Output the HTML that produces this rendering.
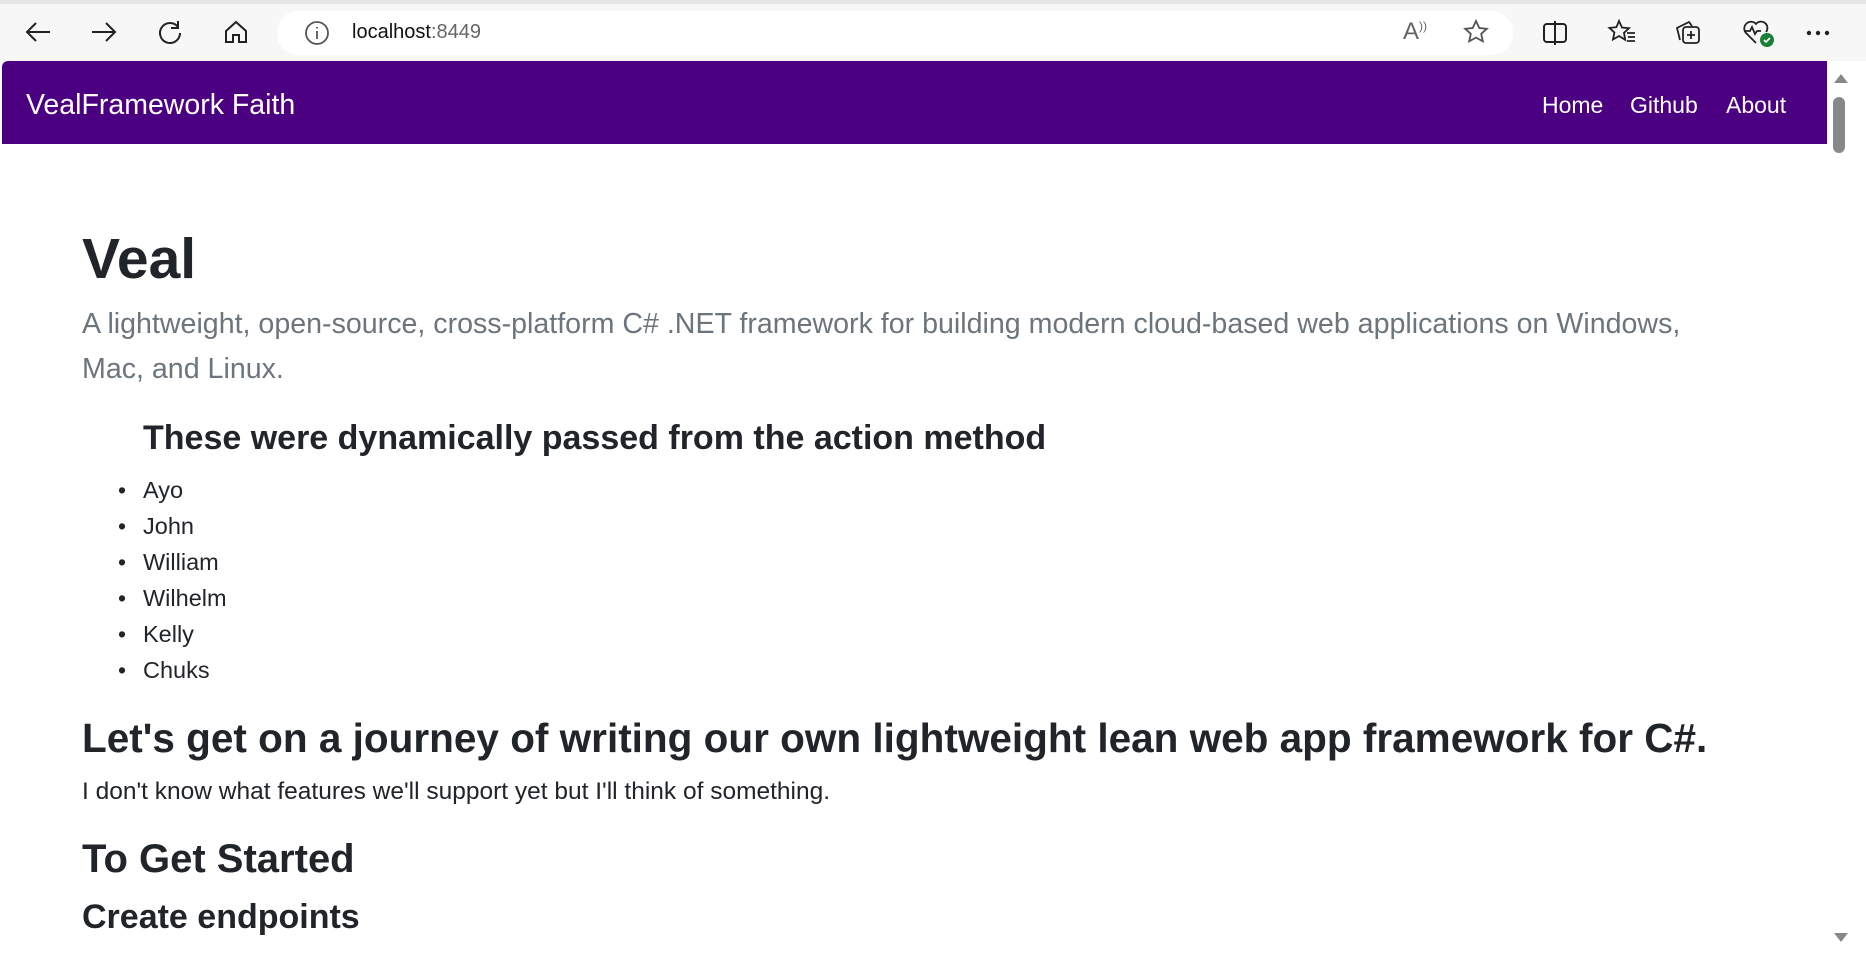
<!DOCTYPE html>
<html><head><meta charset="utf-8"><style>
*{margin:0;padding:0;box-sizing:border-box}
body{width:1866px;height:955px;overflow:hidden;background:#fff;font-family:"Liberation Sans",sans-serif;color:#212529;position:relative}
.a{position:absolute;white-space:nowrap}
.ico{position:absolute}
</style></head><body>
<div class="a" style="left:0;top:0;width:1866px;height:61px;background:#f7f7f7"></div>
<div class="a" style="left:0;top:0;width:1866px;height:4px;background:#e6e6e6"></div>
<svg class="ico" style="left:24px;top:20px" width="28" height="24" viewBox="0 0 28 24" fill="none" stroke="#222" stroke-width="2"><path d="M26 12H3M12 3L3 12l9 9"/></svg>
<svg class="ico" style="left:90px;top:20px" width="28" height="24" viewBox="0 0 28 24" fill="none" stroke="#222" stroke-width="2"><path d="M2 12h23M16 3l9 9-9 9"/></svg>
<svg class="ico" style="left:156px;top:18px" width="28" height="28" viewBox="0 0 28 28" fill="none" stroke="#222" stroke-width="2"><path d="M22 9A10 10 0 1 0 24 15M22 3v7h-7"/></svg>
<svg class="ico" style="left:222px;top:18px" width="28" height="28" viewBox="0 0 28 28" fill="none" stroke="#222" stroke-width="2"><path d="M4 13L14 4l10 9v11h-7v-7h-6v7H4z"/></svg>
<div class="a" style="left:277px;top:11px;width:1236px;height:44px;background:#fff;border-radius:22px"></div>
<svg class="ico" style="left:304px;top:20px" width="26" height="26" viewBox="0 0 26 26" fill="none" stroke="#555" stroke-width="1.8"><circle cx="13" cy="13" r="11"/><path d="M13 11v8M13 7v1.5"/></svg>
<div class="a" style="left:352px;top:21px;font-size:20px;color:#111">localhost<span style="color:#666">:8449</span></div>
<div class="a" style="left:1403px;top:18px;font-size:24px;color:#666">A<sup style="font-size:12px">))</sup></div>
<svg class="ico" style="left:1462px;top:18px" width="28" height="28" viewBox="0 0 28 28" fill="none" stroke="#555" stroke-width="1.8"><path d="M14 3l3.3 7 7.5.8-5.6 5 1.6 7.5L14 19.6l-6.8 3.7 1.6-7.5-5.6-5 7.5-.8z"/></svg>
<svg class="ico" style="left:1541px;top:20px" width="28" height="26" viewBox="0 0 28 26" fill="none" stroke="#222" stroke-width="2"><rect x="3" y="4" width="22" height="18" rx="3"/><path d="M14 1v24"/></svg>
<svg class="ico" style="left:1607px;top:18px" width="30" height="28" viewBox="0 0 30 28" fill="none" stroke="#222" stroke-width="1.8"><path d="M12 3l3 6.5 7 .7-5 4.6 1.2 7L12 18l-6 3.5 1.4-7-5-4.6 7-.7z"/><path d="M20 15h8M21 19h7M20 23h8"/></svg>
<svg class="ico" style="left:1674px;top:18px" width="30" height="30" viewBox="0 0 30 30" fill="none" stroke="#222" stroke-width="1.8"><rect x="9" y="9" width="16" height="16" rx="3"/><path d="M17 13v8M13 17h8M6 22L3 10l12-6 3 4"/></svg>
<svg class="ico" style="left:1742px;top:18px" width="34" height="30" viewBox="0 0 34 30" fill="none" stroke="#222" stroke-width="1.8"><path d="M14 25L4 15A6 6 0 0 1 14 6a6 6 0 0 1 10 8"/><path d="M2 13h6l2-4 3 7 2-3h4"/><circle cx="25" cy="22" r="7" fill="#1a7f37" stroke="none"/><path d="M22 22l2 2 4-4" stroke="#fff" stroke-width="1.6"/></svg>
<svg class="ico" style="left:1806px;top:30px" width="24" height="6"><circle cx="3" cy="3" r="2.2" fill="#222"/><circle cx="12" cy="3" r="2.2" fill="#222"/><circle cx="21" cy="3" r="2.2" fill="#222"/></svg>

<div class="a" style="left:2px;top:61px;width:1825px;height:83px;background:#4b0082;border-radius:6px 0 0 0"></div>
<div class="a" style="left:26px;top:89px;font-size:28.5px;color:#fff">VealFramework Faith</div>
<div class="a" style="left:1542px;top:92px;font-size:23px;color:#fff">Home</div>
<div class="a" style="left:1630px;top:92px;font-size:23px;color:#fff">Github</div>
<div class="a" style="left:1726px;top:92px;font-size:23px;color:#fff">About</div>
<div class="a" style="left:1829px;top:61px;width:37px;height:894px;background:#fff"></div>
<svg class="ico" style="left:1832px;top:72px" width="18" height="12"><path d="M2 11L9 2l7 9z" fill="#888"/></svg>
<div class="a" style="left:1833px;top:97px;width:12px;height:56px;background:#888;border-radius:6px"></div>
<svg class="ico" style="left:1832px;top:932px" width="18" height="12"><path d="M2 1l7 9 7-9z" fill="#888"/></svg>

<div class="a" style="left:82px;top:225px;font-size:57px;font-weight:bold;line-height:1.2">Veal</div>
<div class="a" style="left:82px;top:302px;font-size:28.6px;color:#6c757d;line-height:45px">A lightweight, open-source, cross-platform C# .NET framework for building modern cloud-based web applications on Windows,<br>Mac, and Linux.</div>
<div class="a" style="left:143px;top:419px;font-size:34px;font-weight:bold">These were dynamically passed from the action method</div>
<div class="a" style="left:143px;top:472px;font-size:23.5px;line-height:36px">
<div>Ayo</div><div>John</div><div>William</div><div>Wilhelm</div><div>Kelly</div><div>Chuks</div></div>
<div class="a" style="left:118px;top:472px;font-size:23px;line-height:36px">•<br>•<br>•<br>•<br>•<br>•</div>
<div class="a" style="left:82px;top:715px;font-size:40.5px;font-weight:bold">Let's get on a journey of writing our own lightweight lean web app framework for C#.</div>
<div class="a" style="left:82px;top:778px;font-size:24.5px">I don't know what features we'll support yet but I'll think of something.</div>
<div class="a" style="left:82px;top:837px;font-size:40px;font-weight:bold">To Get Started</div>
<div class="a" style="left:82px;top:898px;font-size:34px;font-weight:bold">Create endpoints</div>
</body></html>
